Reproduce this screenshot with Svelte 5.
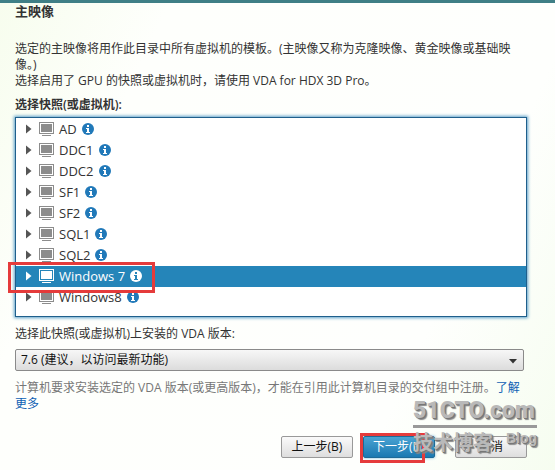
<script lang="ts">
	interface Machine {
		name: string;
		marked?: boolean;
	}

	const machines: Machine[] = [
		{ name: 'AD' },
		{ name: 'DDC1' },
		{ name: 'DDC2' },
		{ name: 'SF1' },
		{ name: 'SF2' },
		{ name: 'SQL1' },
		{ name: 'SQL2' },
		{ name: 'Windows 7', marked: true },
		{ name: 'Windows8' }
	];

	let selected = $state('Windows 7');
	let version = $state('7.6');
</script>

<main class="wizard" lang="zh-CN">
	<div class="page">
		<h1 class="title">主映像</h1>

		<div class="intro">
			<p>选定的主映像将用作此目录中所有虚拟机的模板。(主映像又称为克隆映像、黄金映像或基础映像。)</p>
			<p>选择启用了 GPU 的快照或虚拟机时，请使用 VDA for HDX 3D Pro。</p>
		</div>

		<h2 class="list-label" id="machines-label">选择快照(或虚拟机):</h2>

		<ul class="machines" aria-labelledby="machines-label">
			{#each machines as machine (machine.name)}
				<li class="machine" class:selected={machine.name === selected}>
					<button class="machine-button" onclick={() => (selected = machine.name)}>
						<svg class="expander" width="6" height="10" viewBox="0 0 6 10">
							<path d="M0 0.5 L5.5 5 L0 9.5Z" fill="currentColor" />
						</svg>
						<svg class="monitor" width="15" height="14" viewBox="0 0 15 14">
							<rect x="0.5" y="0.5" width="14" height="11" fill="none" stroke="currentColor" />
							<rect x="2" y="2" width="11" height="8" fill="currentColor" />
							<path d="M3 13.5h9" stroke="currentColor" />
						</svg>
						<span>{machine.name}</span>
						<svg class="info" width="12" height="12" viewBox="0 0 12 12">
							<circle cx="6" cy="6" r="6" fill="currentColor" />
							<path class="info-mark" d="M5 2h2v2H5zM4 5h3v4h1v1H4V9h1V6H4z" />
						</svg>
					</button>
					{#if machine.marked}
						<span class="marker marker-row"></span>
					{/if}
				</li>
			{/each}
		</ul>

		<label class="version-label" for="version">选择此快照(或虚拟机)上安装的 VDA 版本:</label>
		<div class="version">
			<select id="version" bind:value={version}>
				<option value="7.6">7.6 (建议，以访问最新功能)</option>
			</select>
			<svg class="version-arrow" width="8" height="5" viewBox="0 0 8 5">
				<path d="M0 0h8L4 4.5z" fill="#333" />
			</svg>
		</div>

		<p class="hint">
			计算机要求安装选定的 VDA 版本(或更高版本)，才能在引用此计算机目录的交付组中注册。<a href="#more">了解更多</a>
		</p>

		<div class="actions">
			<button class="action">上一步(B)</button>
			<div class="next">
				<button class="action primary">下一步(N)</button>
				<span class="marker marker-next"></span>
			</div>
			<button class="action">取消</button>
			<div class="watermark">
				<div class="watermark-site">51CTO.com</div>
				<div class="watermark-sub">
					<span class="watermark-name">技术博客</span>
					<span class="watermark-blog">Blog</span>
				</div>
			</div>
		</div>
	</div>
</main>

<style>
	:global(body) {
		margin: 0;
		background: #fdfffa;
	}

	.wizard {
		box-sizing: border-box;
		min-height: 100vh;
		border-top: 3px solid #3f7f86;
		background: linear-gradient(115deg, #f7fdee 0, #fefffc 22%, #fefffd 75%, #f6fdf0 100%);
		font-family: "Open Sans", "Noto Sans CJK SC", sans-serif;
		font-size: 12px;
		line-height: 16px;
		color: #333;
		overflow: hidden;
	}

	.page {
		padding: 0 28px 12px 15px;
	}

	.title {
		margin: 0;
		font-size: 13px;
		line-height: 16px;
		font-weight: 600;
	}

	.intro {
		margin: 22px 12px 0 0;
	}

	.intro p {
		margin: 0;
	}

	.list-label {
		margin: 8px 0 4px;
		font-size: 12px;
		line-height: 16px;
		font-weight: 600;
	}

	.machines {
		list-style: none;
		margin: 0;
		padding: 1px 0 8px;
		border: 1px solid #1f5f8c;
		box-shadow: 0 0 3px 1px #5a9fc8;
		background: #fff;
	}

	.machine {
		position: relative;
		height: 21px;
	}

	.machine-button {
		display: flex;
		align-items: center;
		box-sizing: border-box;
		width: 100%;
		height: 21px;
		padding: 0 10px 2px;
		border: 0;
		background: none;
		font: inherit;
		font-size: 13px;
		color: #333;
		text-align: left;
	}

	.expander {
		margin-right: 7px;
		color: #555;
	}

	.monitor {
		margin-right: 5px;
		color: #8c8c8c;
	}

	.info {
		margin-left: 5px;
		color: #2179b9;
	}

	.info-mark {
		fill: #fff;
	}

	.selected {
		background: #2585b9;
	}

	.selected .machine-button,
	.selected .expander,
	.selected .monitor,
	.selected .info {
		color: #fff;
	}

	.selected .info-mark {
		fill: #2585b9;
	}

	/* red frames around the things to click */
	.marker {
		position: absolute;
		z-index: 1;
		box-sizing: border-box;
		border: 3px solid #e53b3b;
		pointer-events: none;
	}

	.marker-row {
		top: -4px;
		left: -8px;
		width: 147px;
		height: 31px;
	}

	.marker-next {
		top: -3px;
		left: -3px;
		width: 65px;
		height: 30px;
	}

	.version-label {
		display: block;
		margin-top: 9px;
	}

	.version {
		position: relative;
		margin: 7px 3px 0 0;
	}

	.version select {
		display: block;
		box-sizing: border-box;
		width: 100%;
		height: 22px;
		padding: 0 24px 0 5px;
		border: 1px solid #8a8a8a;
		border-radius: 2px;
		appearance: none;
		background: linear-gradient(#f7f7f7, #dcdcdc);
		font: inherit;
		color: #111;
	}

	.version-arrow {
		position: absolute;
		top: 10px;
		right: 7px;
		pointer-events: none;
	}

	.hint {
		margin: 9px 0 0;
		color: #777;
	}

	.hint a {
		color: #0f5fb4;
		text-decoration: none;
	}

	.actions {
		position: relative;
		display: flex;
		justify-content: flex-end;
		margin-top: 24px;
	}

	.action {
		box-sizing: border-box;
		width: 72px;
		height: 22px;
		padding: 0;
		border: 1px solid #999;
		border-radius: 2px;
		background: linear-gradient(#fafafa, #dedede);
		font: inherit;
		color: #111;
	}

	.next {
		position: relative;
		margin: 0 20px 0 10px;
	}

	.primary {
		border-color: #1c6a98;
		background: linear-gradient(#4aa3d2, #1a79b2);
		box-shadow: 0 0 3px #6fb2d8;
		color: #fff;
	}

	.watermark {
		position: absolute;
		right: -10px;
		bottom: 3px;
		z-index: 2;
		width: 124px;
		color: #b9b9b9;
		text-shadow: 1px 1px 0 #777, 2px 2px 1px #888;
		font-weight: 700;
		pointer-events: none;
	}

	.watermark-site {
		border-bottom: 3px solid #999;
		font-family: Roboto, "Liberation Sans", sans-serif;
		font-size: 23px;
		font-weight: 900;
		line-height: 28px;
		white-space: nowrap;
	}

	.watermark-sub {
		display: flex;
		justify-content: space-between;
		margin-top: 3px;
	}

	.watermark-name {
		font-size: 20px;
		line-height: 24px;
	}

	.watermark-blog {
		font-family: "Liberation Sans", sans-serif;
		font-size: 14px;
		line-height: 14px;
	}
</style>
